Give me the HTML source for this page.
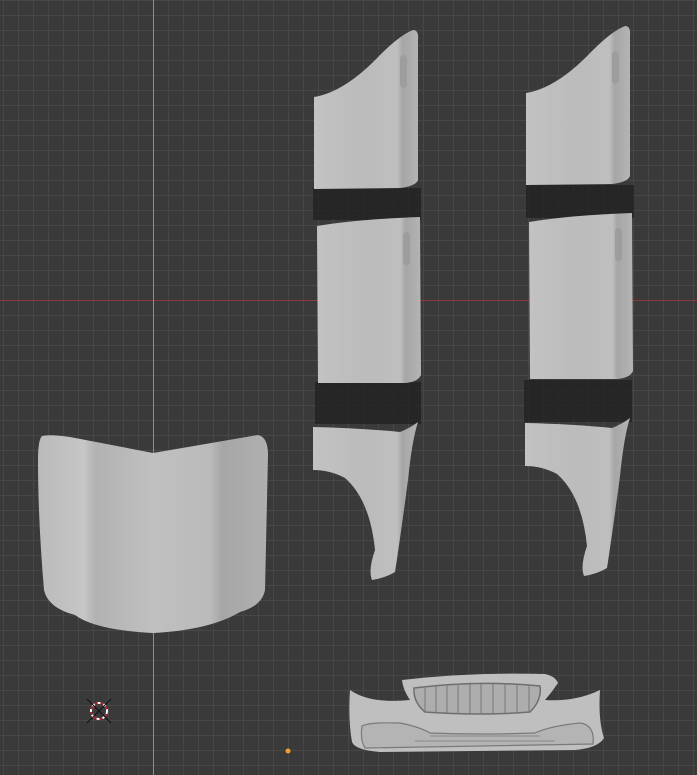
<!DOCTYPE html>
<html><head><style>
html,body{margin:0;padding:0;background:#3c3c3c;width:697px;height:775px;overflow:hidden}
svg{display:block}
</style></head><body>
<svg width="697" height="775" viewBox="0 0 697 775" xmlns="http://www.w3.org/2000/svg">
<defs>
<pattern id="g" x="3" y="0" width="15" height="15" patternUnits="userSpaceOnUse">
<path d="M0 0.5H15M0.5 0V15" stroke="#474747" stroke-width="1" fill="none"/>
</pattern>
<linearGradient id="dg" x1="0" x2="1" y1="0" y2="0">
<stop offset="0" stop-color="#c2c2c2"/><stop offset="0.5" stop-color="#bbbbbb"/><stop offset="0.8" stop-color="#bfbfbf"/><stop offset="0.85" stop-color="#a6a6a6"/><stop offset="1" stop-color="#b4b4b4"/>
</linearGradient>
<linearGradient id="hg" x1="0" x2="1" y1="0" y2="0">
<stop offset="0" stop-color="#bababa"/><stop offset="0.2" stop-color="#c6c6c6"/><stop offset="0.25" stop-color="#b2b2b2"/><stop offset="0.5" stop-color="#c0c0c0"/><stop offset="0.75" stop-color="#bababa"/><stop offset="0.8" stop-color="#a6a6a6"/><stop offset="1" stop-color="#b0b0b0"/>
</linearGradient>
</defs>
<rect width="697" height="775" fill="#3a3a3a"/>
<rect width="697" height="775" fill="url(#g)"/>
<line x1="0" y1="300.5" x2="697" y2="300.5" stroke="#8a3a3a" stroke-width="1"/>
<line x1="153.5" y1="0" x2="153.5" y2="775" stroke="#8aa040" stroke-width="1"/>

<!-- shadow bands -->
<rect x="313" y="188" width="108" height="32" fill="#222" opacity="0.8"/>
<rect x="315" y="382" width="106" height="42" fill="#222" opacity="0.8"/>
<rect x="526" y="185" width="108" height="33" fill="#222" opacity="0.8"/>
<rect x="524" y="380" width="108" height="42" fill="#222" opacity="0.8"/>

<g id="col">
<path d="M314 97 Q345 92 380 55 Q400 35 413 30 Q419 30 418 40 L418 180 Q416 186 400 188 L314 189 Z" fill="url(#dg)"/>
<rect x="400" y="55" width="7" height="33" rx="3.5" fill="#9d9d9d"/>
<path d="M317 226 Q360 219 420 217 L421 375 Q418 382 405 383 L318 383 Z" fill="url(#dg)"/>
<rect x="403" y="232" width="7" height="33" rx="3.5" fill="#9d9d9d"/>
<path d="M313 427 Q360 428 400 432 Q410 428 418 422 Q412 440 408 480 Q400 540 395 572 Q385 578 372 580 Q368 570 375 550 Q370 500 345 478 Q330 470 313 470 Z" fill="url(#dg)"/>
</g>
<use href="#col" transform="translate(212,-4)"/>

<!-- hood -->
<path d="M42 436 Q50 434 70 437 L153 453 L258 435 Q268 437 268 455 L265 590 Q262 606 240 612 Q210 630 153 633 Q95 630 75 615 Q48 608 44 590 Q38 520 38 460 Q38 440 42 436 Z" fill="url(#hg)"/>

<!-- bumper -->
<path d="M402 680 Q470 672 545 674 Q555 676 558 683 Q552 692 545 700 Q575 702 600 690 Q598 720 604 738 Q598 748 575 750 L380 752 Q355 750 352 742 Q348 720 350 690 Q370 704 410 700 Q403 690 402 680 Z" fill="#bfbfbf"/>
<path d="M414 688 Q480 680 540 686 Q542 700 530 712 Q480 716 425 712 Q413 702 414 688 Z" fill="#adadad" stroke="#6e6e6e" stroke-width="1.5"/>
<g stroke="#777" stroke-width="1">
<line x1="425" y1="688" x2="425" y2="712"/><line x1="436" y1="686" x2="436" y2="713"/><line x1="447" y1="685" x2="447" y2="714"/><line x1="458" y1="684" x2="458" y2="714"/><line x1="470" y1="684" x2="470" y2="714"/><line x1="481" y1="684" x2="481" y2="714"/><line x1="493" y1="684" x2="493" y2="714"/><line x1="505" y1="684" x2="505" y2="714"/><line x1="517" y1="685" x2="517" y2="714"/><line x1="529" y1="686" x2="529" y2="713"/>
</g>
<path d="M362 726 Q370 722 400 723 Q420 727 430 733 Q480 735 535 733 Q550 726 580 723 Q595 725 593 744 L365 748 Q360 740 362 726 Z" fill="#b4b4b4" stroke="#7a7a7a" stroke-width="1.2"/>
<path d="M430 736 L540 736 M415 741 L555 741" stroke="#8a8a8a" stroke-width="1"/>

<!-- 3d cursor -->
<circle cx="99" cy="711" r="8" fill="none" stroke="#fff" stroke-width="2" stroke-dasharray="3 3"/>
<circle cx="99" cy="711" r="8" fill="none" stroke="#b02030" stroke-width="2" stroke-dasharray="3 3" stroke-dashoffset="3"/>
<path d="M87 699 L111 723 M111 699 L87 723" stroke="#111" stroke-width="1"/>
<circle cx="288" cy="751" r="2.5" fill="#f0a030"/>
</svg>
</body></html>
